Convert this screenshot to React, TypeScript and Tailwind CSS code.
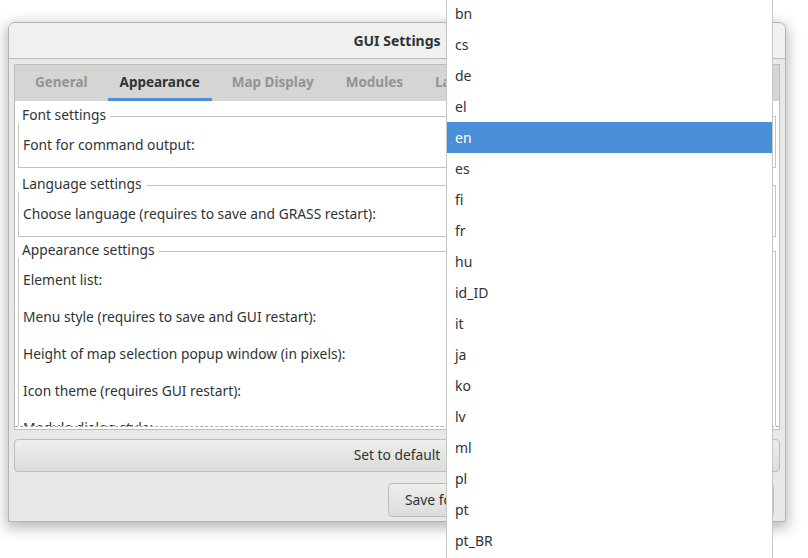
import React from "react";

const font = { fontFamily: '"Noto Sans", "Open Sans", sans-serif' };

function Frame({ title, children, className = "" }: { title: string; children: React.ReactNode; className?: string }) {
  return (
    <div className={className}>
      <div className="flex h-[16px] items-center">
        <span className="pl-[4px] pr-[4px] text-[13.8px] leading-[16px] text-[#2e3436]">{title}</span>
        <div className="h-[7px] flex-1 self-end border-t border-r border-[#c3c3c0]" />
      </div>
      <div className="border-b border-l border-r border-[#c3c3c0]">{children}</div>
    </div>
  );
}

const langs = ["bn", "cs", "de", "el", "en", "es", "fi", "fr", "hu", "id_ID", "it", "ja", "ko", "lv", "ml", "pl", "pt", "pt_BR", "ro", "ru"];

export default function App() {
  return (
    <div className="relative h-[558px] w-[808px] overflow-hidden bg-white" style={font}>
      {/* Dialog window */}
      <div className="ml-[8px] mt-[22px] flex h-[500px] w-[778px] flex-col overflow-hidden rounded-t-[7px] border border-[#b3b3b0] bg-[#e8e8e7] shadow-[0_4px_14px_2px_rgba(0,0,0,0.28)]">
        <div className="flex h-[36px] shrink-0 items-center justify-center border-b border-[#b9b9b6] bg-[#f0f0ef]">
          <span className="text-[14px] font-bold text-[#2e3436]">GUI Settings</span>
        </div>
        <div className="flex flex-1 flex-col px-[5px] pt-[5px] pb-[5px]">
          {/* Notebook */}
          <div className="flex h-[366px] flex-col border border-[#bdbdba] bg-white">
            <div className="flex h-[36px] shrink-0 gap-[8px] bg-[#d5d5d3] pl-[8px]">
              {["General", "Appearance", "Map Display", "Modules", "Layers"].map((t) => (
                <div
                  key={t}
                  className={
                    t === "Appearance"
                      ? "flex items-center border-b-[3px] border-[#4a90d9] px-[12px] pt-[2px] text-[13.5px] font-bold text-[#2e3436]"
                      : "flex items-center border-b-[3px] border-transparent px-[12px] pt-[2px] text-[13.5px] font-bold text-[#919494]"
                  }
                >
                  {t}
                </div>
              ))}
            </div>
            <div className="relative flex-1 overflow-hidden px-[3px] pt-[6px] text-[13.8px] text-[#2e3436]">
              <Frame title="Font settings">
                <div className="flex h-[44px] items-center px-[4px]">Font for command output:</div>
              </Frame>
              <Frame title="Language settings" className="mt-[8px]">
                <div className="flex h-[44px] items-center px-[4px]">Choose language (requires to save and GRASS restart):</div>
              </Frame>
              <Frame title="Appearance settings" className="mt-[5px]">
                <div className="flex flex-col px-[4px] pt-[4px]">
                  <div className="flex h-[37px] items-center">Element list:</div>
                  <div className="flex h-[37px] items-center">Menu style (requires to save and GUI restart):</div>
                  <div className="flex h-[37px] items-center">Height of map selection popup window (in pixels):</div>
                  <div className="flex h-[37px] items-center">Icon theme (requires GUI restart):</div>
                  <div className="flex h-[37px] items-center">Module dialog style:</div>
                  <div className="flex h-[37px] items-center">Statusbar:</div>
                </div>
              </Frame>
              <div className="absolute bottom-0 left-0 right-0 h-[3px] border-t border-dashed border-[#a8a8a5] bg-white" />
            </div>
          </div>
          <button className="mt-[9px] flex h-[33px] shrink-0 items-center justify-center rounded-[4px] border border-[#bdbdba] bg-gradient-to-b from-[#eeeeed] to-[#dcdcda] text-[13.8px] text-[#2e3436]">
            Set to default
          </button>
          <div className="mt-[11px] flex h-[34px] shrink-0 justify-end gap-[10px] pr-[6px]">
            {[
              ["Save for this session", "w-[200px]"],
              ["Save", "w-[83px]"],
              ["Close", "w-[83px]"],
            ].map(([t, w]) => (
              <button
                key={t}
                className={
                  w +
                  " flex items-center justify-start rounded-[4px] border border-[#bdbdba] bg-gradient-to-b from-[#eeeeed] to-[#dcdcda] px-[16px] text-[13.8px] text-[#2e3436]"
                }
              >
                {t}
              </button>
            ))}
          </div>
        </div>
      </div>

      {/* Dropdown popup */}
      <div className="absolute left-[446px] top-[-2px] flex h-[562px] w-[327px] flex-col border-l border-r border-[#c6c6c3] bg-white">
        {langs.map((l) => (
          <div
            key={l}
            className={
              l === "en"
                ? "flex h-[31px] shrink-0 items-center bg-[#4a90d9] px-[8px] text-[14px] text-white"
                : "flex h-[31px] shrink-0 items-center px-[8px] text-[14px] text-[#2e3436]"
            }
          >
            {l}
          </div>
        ))}
      </div>
    </div>
  );
}
